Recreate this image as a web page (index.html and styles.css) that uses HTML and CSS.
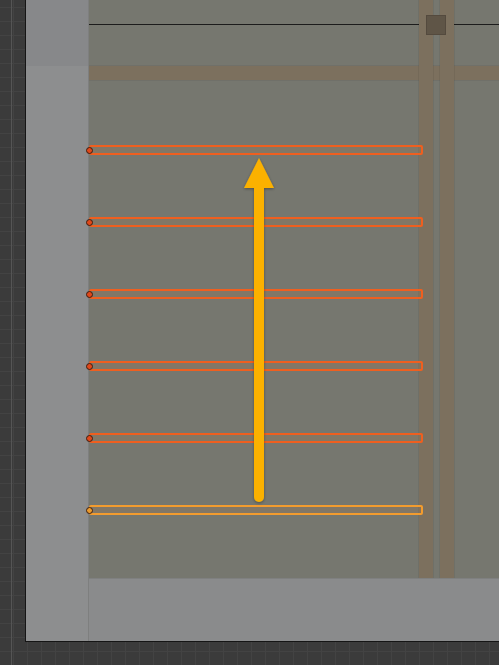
FILE: index.html
```html
<!DOCTYPE html>
<html>
<head>
<meta charset="utf-8">
<link rel="stylesheet" href="styles.css">
</head>
<body>
<div class="viewport">
  <div class="frame">
    <div class="sidebar">
      <div class="sidebar-top"></div>
      <div class="sidebar-body"></div>
    </div>
    <div class="main">
      <div class="canvas">
        <div class="header">
          <div class="rule rule-left"></div>
          <div class="rule-gap"></div>
          <div class="rule rule-right"></div>
        </div>
        <div class="hbar"></div>
        <div class="lanes">
          <div class="lane"></div>
          <div class="lane"></div>
        </div>
        <div class="handle"></div>
        <div class="bars">
          <div class="bar"></div>
          <div class="bar"></div>
          <div class="bar"></div>
          <div class="bar"></div>
          <div class="bar"></div>
          <div class="bar bar-active"></div>
        </div>
        <svg class="arrow" width="410" height="578" viewBox="0 0 410 578">
          <defs>
            <filter id="sh" x="-50%" y="-10%" width="200%" height="120%">
              <feDropShadow dx="0" dy="1" stdDeviation="1.5" flood-color="#000" flood-opacity="0.35"/>
            </filter>
          </defs>
          <g filter="url(#sh)" fill="#fbb100">
            <rect x="165" y="180" width="10" height="322" rx="5" ry="5"/>
            <polygon points="170,158 185,188 155,188"/>
          </g>
        </svg>
      </div>
      <div class="bottom"></div>
    </div>
  </div>
</div>
</body>
</html>
```
FILE: styles.css
```css
html, body {
  margin: 0;
  padding: 0;
}
body {
  width: 499px;
  height: 665px;
  overflow: hidden;
  font-family: "Liberation Sans", sans-serif;
}
.viewport {
  width: 499px;
  height: 665px;
  box-sizing: border-box;
  padding-left: 25px;
  background-color: #3b3b3b;
  background-image:
    linear-gradient(90deg, transparent 11px, #555555 11px, #555555 12px, transparent 12px),
    repeating-linear-gradient(90deg, transparent 0, transparent 13px, #434343 13px, #434343 14px),
    repeating-linear-gradient(0deg, transparent 0, transparent 13px, #434343 13px, #434343 14px);
  background-repeat: no-repeat, repeat, repeat;
}
.frame {
  display: flex;
  height: 642px;
  box-sizing: border-box;
  border-left: 1px solid #151515;
  border-bottom: 1px solid #151515;
}
.sidebar {
  width: 63px;
  display: flex;
  flex-direction: column;
  border-right: 1px solid #7e7f7f;
  box-sizing: border-box;
}
.sidebar-top {
  height: 66px;
  background: #87888a;
}
.sidebar-body {
  flex: 1;
  background: #8d8e8f;
}
.main {
  flex: 1;
  display: flex;
  flex-direction: column;
  min-width: 0;
}
.canvas {
  position: relative;
  height: 578px;
  background: #76776f;
}
.header {
  display: flex;
  height: 25px;
  align-items: flex-end;
}
.rule {
  height: 1px;
  background: #1c1c1c;
}
.rule-left {
  width: 330px;
}
.rule-gap {
  width: 35px;
}
.rule-right {
  flex: 1;
}
.hbar {
  margin-top: 41px;
  height: 14px;
  background: #7c705e;
  box-shadow: 0 -1px 0 rgba(0,0,0,0.05), 0 1px 0 rgba(0,0,0,0.05);
}
.lanes {
  position: absolute;
  left: 330px;
  top: 0;
  height: 578px;
  display: flex;
  gap: 7px;
}
.lane {
  width: 14px;
  height: 100%;
  background: #7c705e;
  box-shadow: -1px 0 0 rgba(0,0,0,0.06), 1px 0 0 rgba(0,0,0,0.06);
}
.handle {
  position: absolute;
  left: 337px;
  top: 15px;
  width: 20px;
  height: 20px;
  box-sizing: border-box;
  background: #5f5547;
  border: 1px solid #544a3e;
}
.bars {
  position: absolute;
  left: 0;
  top: 145px;
  display: flex;
  flex-direction: column;
  gap: 62px;
}
.bar {
  position: relative;
  width: 334px;
  height: 10px;
  box-sizing: border-box;
  border: 2px solid #ef5f1f;
  border-radius: 2px;
  background: rgba(220, 120, 40, 0.12);
}
.bar::before {
  content: "";
  position: absolute;
  left: -5px;
  top: 50%;
  width: 7px;
  height: 7px;
  margin-top: -3.5px;
  box-sizing: border-box;
  border-radius: 50%;
  background: #e0481a;
  border: 1px solid #3a1d10;
}
.bar-active {
  border-color: #f39c2e;
}
.bar-active::before {
  background: #eb9a2c;
}
.arrow {
  position: absolute;
  left: 0;
  top: 0;
}
.bottom {
  flex: 1;
  background: #8a8b8c;
  border-top: 1px solid #7f8080;
}
```
